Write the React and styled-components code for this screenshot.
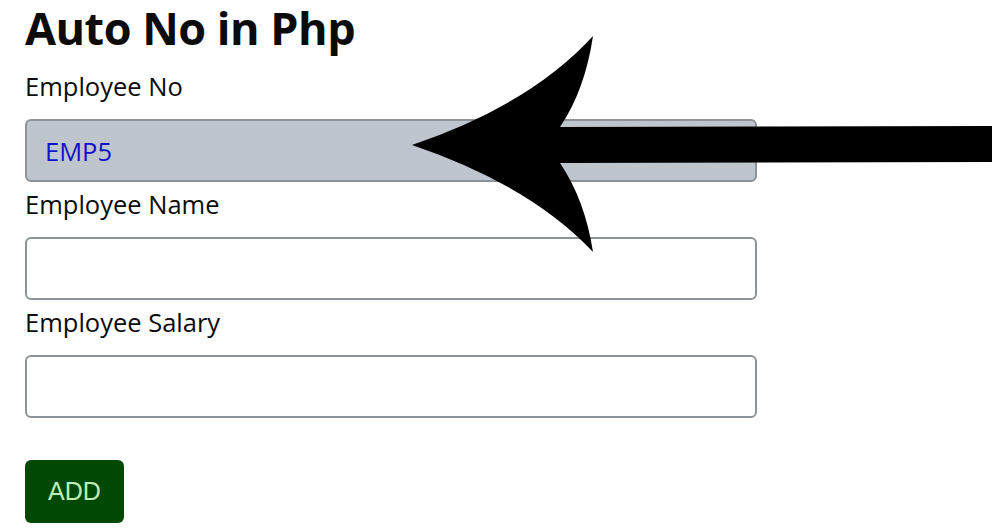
import React from 'react'
import styled, { createGlobalStyle } from 'styled-components'

const GlobalStyle = createGlobalStyle`
  html, body {
    margin: 0;
    padding: 0;
    background: #ffffff;
  }
  body {
    font-family: "Open Sans", "Noto Sans", sans-serif;
    color: #0b0b0b;
  }
`

const Page = styled.div`
  position: relative;
  width: 1003px;
  height: 530px;
  overflow: hidden;
`

const Form = styled.form`
  display: flex;
  flex-direction: column;
  width: 732px;
  padding-left: 25px;
`

const Title = styled.h1`
  margin: 0 0 16px;
  font-size: 45px;
  line-height: 55px;
  font-weight: 700;
  letter-spacing: -0.5px;
`

const Label = styled.label`
  display: block;
  margin: ${(p) => (p.first ? '0' : '7px')} 0 18px;
  font-size: 25.5px;
  line-height: 30px;
`

const Input = styled.input`
  box-sizing: border-box;
  width: 732px;
  height: 63px;
  padding: 0 18px;
  border: 2px solid #8e939a;
  border-radius: 6px;
  background: ${(p) => (p.readOnly ? '#bec5cd' : '#ffffff')};
  color: #1212cc;
  font-family: "Open Sans", "Noto Sans", sans-serif;
  font-size: 25.5px;
  font-weight: 500;
  outline: none;
`

const Button = styled.button`
  align-self: flex-start;
  margin-top: 42px;
  width: 99px;
  height: 63px;
  border: none;
  border-radius: 6px;
  background: #024805;
  color: #bdeeb4;
  font-family: "Liberation Sans", Arial, sans-serif;
  font-size: 25px;
`

const Overlay = styled.svg`
  position: absolute;
  left: 0;
  top: 0;
  pointer-events: none;
`

const Arrow = () => (
  <Overlay width="1003" height="530" viewBox="0 0 1003 530">
    <path
      d="M412 145 Q530 105 593 36 Q585 90 560 127 L992 126 L992 162 L560 163 Q585 200 593 252 Q530 185 412 145 Z"
      fill="#000"
    />
  </Overlay>
)

export default function App() {
  return (
    <Page>
      <GlobalStyle />
      <Form onSubmit={(e) => e.preventDefault()}>
        <Title>Auto No in Php</Title>
        <Label first>Employee No</Label>
        <Input readOnly value="EMP5" />
        <Label>Employee Name</Label>
        <Input />
        <Label>Employee Salary</Label>
        <Input />
        <Button type="submit">ADD</Button>
      </Form>
      <Arrow />
    </Page>
  )
}
